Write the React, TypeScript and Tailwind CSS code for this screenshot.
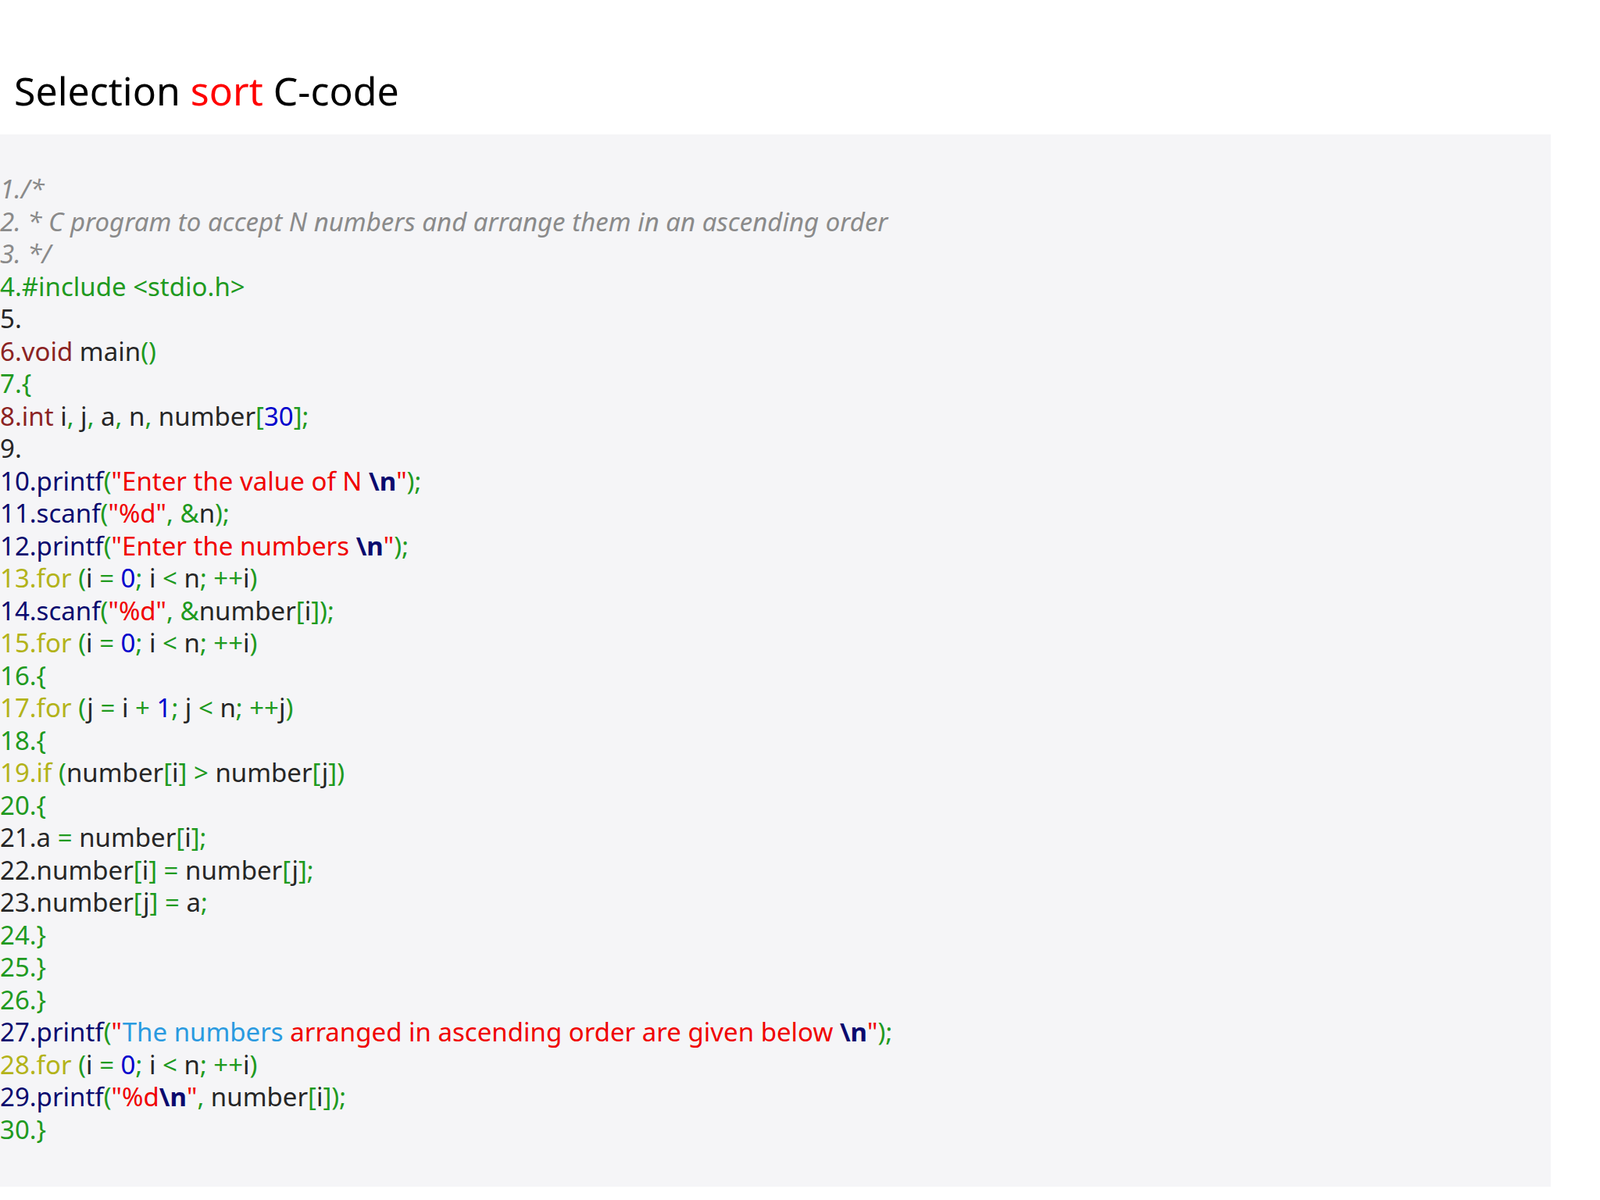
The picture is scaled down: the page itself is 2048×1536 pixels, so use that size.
const c = {
  C: "text-[#8a8a8a] italic",
  G: "text-[#1f9a1f]",
  R: "text-[#f00000]",
  K: "text-[#262626]",
  B: "text-[#0000cc]",
  N: "text-[#0a0a6e]",
  X: "text-[#0a0a6e] font-bold",
  Y: "text-[#b3b31a]",
  M: "text-[#8b2323]",
  L: "text-[#2a9ae0]",
};
type T = [keyof typeof c, string];

const forLine = (n: string, v: string, start: string, plus: T[] = []): T[] => [
  ["Y", `${n}.for`],
  ["G", " ("],
  ["K", v],
  ["G", " = "],
  ...(plus.length ? plus : ([["B", start]] as T[])),
  ["G", ";"],
  ["K", ` ${v}`],
  ["G", " < "],
  ["K", "n"],
  ["G", "; ++"],
  ["K", v],
  ["G", ")"],
];

const lines: T[][] = [
  [["C", "1./*"]],
  [["C", "2. * C program to accept N numbers and arrange them in an ascending order"]],
  [["C", "3. */"]],
  [["G", "4.#include <stdio.h>"]],
  [["K", "5."]],
  [["M", "6.void"], ["K", " main"], ["G", "()"]],
  [["G", "7.{"]],
  [
    ["M", "8.int"], ["K", " i"], ["G", ","], ["K", " j"], ["G", ","], ["K", " a"], ["G", ","],
    ["K", " n"], ["G", ","], ["K", " number"], ["G", "["], ["B", "30"], ["G", "];"],
  ],
  [["K", "9."]],
  [["N", "10.printf"], ["G", "("], ["R", "\"Enter the value of N "], ["X", "\\n"], ["R", "\""], ["G", ");"]],
  [["N", "11.scanf"], ["G", "("], ["R", "\"%d\""], ["G", ", &"], ["K", "n"], ["G", ");"]],
  [["N", "12.printf"], ["G", "("], ["R", "\"Enter the numbers "], ["X", "\\n"], ["R", "\""], ["G", ");"]],
  forLine("13", "i", "0"),
  [["N", "14.scanf"], ["G", "("], ["R", "\"%d\""], ["G", ", &"], ["K", "number"], ["G", "["], ["K", "i"], ["G", "]);"]],
  forLine("15", "i", "0"),
  [["G", "16.{"]],
  forLine("17", "j", "", [["K", "i"], ["G", " + "], ["B", "1"]]),
  [["G", "18.{"]],
  [
    ["Y", "19.if"], ["G", " ("], ["K", "number"], ["G", "["], ["K", "i"], ["G", "] > "],
    ["K", "number"], ["G", "["], ["K", "j"], ["G", "])"],
  ],
  [["G", "20.{"]],
  [["K", "21.a"], ["G", " = "], ["K", "number"], ["G", "["], ["K", "i"], ["G", "];"]],
  [["K", "22.number"], ["G", "["], ["K", "i"], ["G", "] = "], ["K", "number"], ["G", "["], ["K", "j"], ["G", "];"]],
  [["K", "23.number"], ["G", "["], ["K", "j"], ["G", "] = "], ["K", "a"], ["G", ";"]],
  [["G", "24.}"]],
  [["G", "25.}"]],
  [["G", "26.}"]],
  [
    ["N", "27.printf"], ["G", "("], ["R", "\""], ["L", "The numbers"],
    ["R", " arranged in ascending order are given below "], ["X", "\\n"], ["R", "\""], ["G", ");"],
  ],
  forLine("28", "i", "0"),
  [["N", "29.printf"], ["G", "("], ["R", "\"%d"], ["X", "\\n"], ["R", "\""], ["G", ", "], ["K", "number"], ["G", "["], ["K", "i"], ["G", "]);"]],
  [["G", "30.}"]],
];

export default function App() {
  return (
    <div className="w-[2048px] h-[1536px] bg-white">
      <h1 className="pt-[84px] pl-[18px] h-[172px] text-[50px] leading-[64px] text-black font-['Lato',sans-serif]">
        Selection <span className="text-[#ff0000]">sort</span> C-code
      </h1>
      <div className="w-[1985px] h-[1347px] bg-[#f5f5f7] pt-[49px] font-['Liberation_Sans',Arial,sans-serif] text-[33px] leading-[41.5px] whitespace-pre">
        {lines.map((ln, i) => (
          <div key={i}>
            {ln.map(([k, t], j) => (
              <span key={j} className={c[k]}>
                {t}
              </span>
            ))}
          </div>
        ))}
      </div>
    </div>
  );
}
